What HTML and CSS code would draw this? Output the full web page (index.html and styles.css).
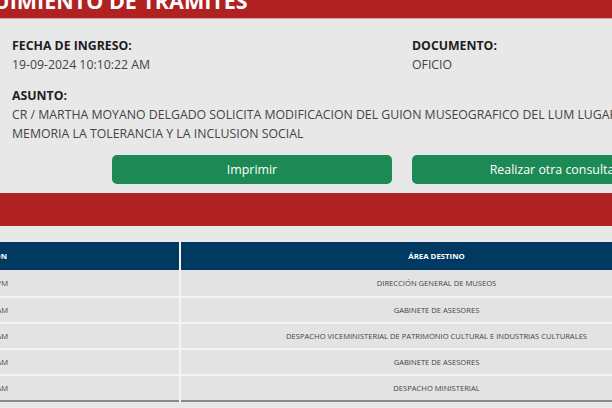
FILE: index.html
```html
<!DOCTYPE html>
<html lang="es">
<head>
<meta charset="utf-8">
<title>Seguimiento de trámites</title>
<link rel="stylesheet" href="styles.css">
</head>
<body>
<div class="page">
  <header class="topbar">
    <h1 class="title">SEGUIMIENTO DE TRAMITES</h1>
  </header>

  <section class="info">
    <div class="field">
      <div class="label">FECHA DE INGRESO:</div>
      <div class="value">19-09-2024 10:10:22 AM</div>
    </div>
    <div class="field">
      <div class="label">DOCUMENTO:</div>
      <div class="value">OFICIO</div>
    </div>
    <div class="field wide">
      <div class="label">ASUNTO:</div>
      <div class="value asunto">CR / MARTHA MOYANO DELGADO SOLICITA MODIFICACION DEL GUION MUSEOGRAFICO DEL LUM LUGAR DE LA MEMORIA LA TOLERANCIA Y LA INCLUSION SOCIAL</div>
    </div>
  </section>

  <div class="actions">
    <button class="btn">Imprimir</button>
    <button class="btn">Realizar otra consulta</button>
  </div>

  <div class="band"></div>

  <div class="table-wrap">
    <table class="grid">
      <thead>
        <tr><th class="c1">FECHA DE RECEPCIÓN</th><th class="c2">ÁREA DESTINO</th></tr>
      </thead>
      <tbody>
        <tr><td>19-09-2024 12:14:51 PM</td><td>DIRECCIÓN GENERAL DE MUSEOS</td></tr>
        <tr><td>20-09-2024 09:32:18 AM</td><td>GABINETE DE ASESORES</td></tr>
        <tr><td>23-09-2024 10:05:44 AM</td><td>DESPACHO VICEMINISTERIAL DE PATRIMONIO CULTURAL E INDUSTRIAS CULTURALES</td></tr>
        <tr><td>24-09-2024 11:20:07 AM</td><td>GABINETE DE ASESORES</td></tr>
        <tr><td>25-09-2024 08:47:39 AM</td><td>DESPACHO MINISTERIAL</td></tr>
      </tbody>
    </table>
  </div>
</div>
</body>
</html>
```

FILE: styles.css
```css
html, body {
  margin: 0;
  padding: 0;
}
body {
  background: #e8e8e8;
  font-family: "Open Sans", "Liberation Sans", sans-serif;
  overflow: hidden;
  width: 612px;
  height: 408px;
}
.page {
  width: 824px;
}
.topbar {
  background: #b02222;
  height: 18px;
  overflow: hidden;
  border-bottom: 1px solid #d8a0a0;
}
.title {
  margin: -12px 0 0 -46px;
  font-size: 21.5px;
  line-height: 26px;
  font-weight: 700;
  color: #ffffff;
  white-space: nowrap;
}
.info {
  display: grid;
  grid-template-columns: 400px 1fr;
  row-gap: 12px;
  padding: 17px 12px 0 12px;
}
.field.wide {
  grid-column: 1 / -1;
}
.label {
  font-size: 12.3px;
  line-height: 19px;
  font-weight: 700;
  color: #1e1e1e;
}
.value {
  font-size: 12.3px;
  line-height: 19px;
  color: #444444;
}
.asunto {
  width: 665px;
}
.actions {
  display: flex;
  gap: 20px;
  padding: 12px 0 0 112px;
}
.btn {
  width: 280px;
  height: 29px;
  border: none;
  border-radius: 5px;
  background: #1d8a56;
  color: #ffffff;
  font-family: "Open Sans", "Liberation Sans", sans-serif;
  font-size: 12.4px;
  padding: 0;
}
.band {
  margin-top: 9px;
  height: 33px;
  background: #b02222;
}
.table-wrap {
  margin: 16px 0 0 -248px;
  width: 940px;
}
.grid {
  width: 100%;
  border-collapse: collapse;
  table-layout: fixed;
  border-bottom: 2px solid #8a8a8a;
}
.grid th {
  background: #003a63;
  color: #ffffff;
  font-size: 7.8px;
  font-weight: 700;
  height: 28px;
  padding: 0;
  text-align: center;
}
.grid .c1 { width: 427px; }
.grid th + th,
.grid td + td {
  border-left: 2px solid #f4f4f4;
}
.grid td {
  background: #e3e3e3;
  color: #444444;
  font-size: 7.6px;
  height: 24px;
  padding: 0;
  text-align: center;
  border-top: 2px solid #f4f4f4;
}
.grid tbody tr:first-child td {
  border-top: none;
  height: 26px;
}
```
